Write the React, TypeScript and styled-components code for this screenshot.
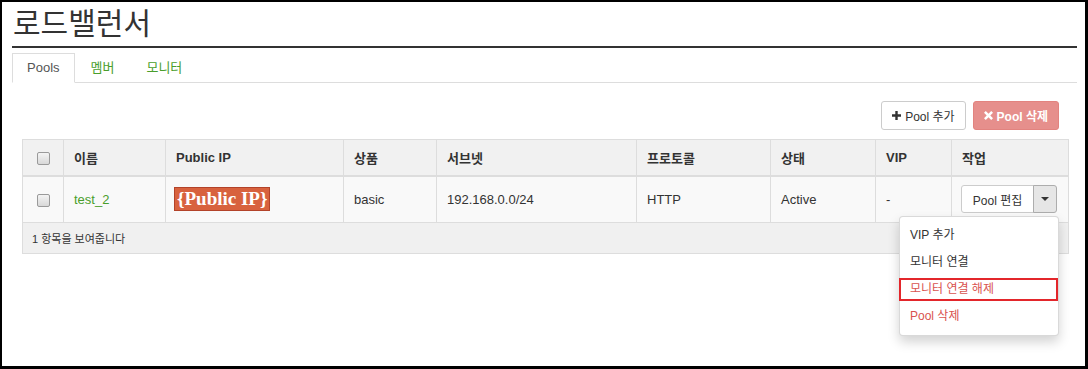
import React from 'react';
import styled, { createGlobalStyle } from 'styled-components';

const GlobalStyle = createGlobalStyle`
  html, body {
    margin: 0;
    padding: 0;
    background: #fff;
  }
  body {
    font-family: "Liberation Sans", "Noto Sans CJK KR", sans-serif;
    font-size: 13px;
    color: #333;
  }
  * {
    box-sizing: border-box;
  }
`;

const Frame = styled.div`
  width: 1088px;
  height: 369px;
  border-style: solid;
  border-color: #000;
  border-width: 2px 3px 3px 2px;
  padding: 0 8px 0 10px;
  overflow: hidden;
`;

const PageTitle = styled.h1`
  margin: 0;
  padding: 4px 0 4px 1px;
  font-size: 30px;
  line-height: 36px;
  font-weight: 400;
  color: #333;
  border-bottom: 2px solid #333;
`;

const TabBar = styled.div`
  display: flex;
  margin-top: 5px;
  height: 30px;
  border-bottom: 1px solid #ddd;
`;

const Tab = styled.div<{ $active?: boolean }>`
  height: 30px;
  margin-bottom: -1px;
  padding: 0 ${p => (p.$active ? 14 : 15)}px;
  line-height: 28px;
  font-size: 13px;
  border: 1px solid ${p => (p.$active ? '#ddd' : 'transparent')};
  border-bottom-color: ${p => (p.$active ? '#fff' : 'transparent')};
  background: ${p => (p.$active ? '#fff' : 'transparent')};
  color: ${p => (p.$active ? '#555' : '#4a9e2c')};
`;

const Toolbar = styled.div`
  display: flex;
  justify-content: flex-end;
  gap: 7px;
  margin-top: 18px;
  padding-right: 18px;
`;

const Button = styled.button<{ $danger?: boolean }>`
  display: inline-flex;
  align-items: center;
  gap: 4px;
  height: 29px;
  padding: 0 10px;
  font-family: inherit;
  font-size: 12px;
  font-weight: ${p => (p.$danger ? 700 : 400)};
  border-radius: 3px;
  border: 1px solid ${p => (p.$danger ? '#e2837f' : '#ccc')};
  background: ${p => (p.$danger ? '#e68f8c' : '#fff')};
  color: ${p => (p.$danger ? '#fff' : '#333')};
`;

const TableWrap = styled.div`
  margin-top: 9px;
  padding: 0 9px 0 10px;
`;

const Table = styled.table`
  width: 1046px;
  table-layout: fixed;
  border-collapse: collapse;
  border: 1px solid #ddd;
`;

const Th = styled.th<{ $center?: boolean }>`
  height: 36px;
  padding: 0 10px;
  text-align: ${p => (p.$center ? 'center' : 'left')};
  font-size: 13px;
  font-weight: 700;
  color: #333;
  background: #f1f1f1;
  border: 1px solid #ddd;
  border-bottom-width: 2px;
`;

const Td = styled.td<{ $center?: boolean; $pad?: number }>`
  height: 47px;
  padding: 0 ${p => p.$pad ?? 10}px;
  text-align: ${p => (p.$center ? 'center' : 'left')};
  font-size: 13px;
  color: #333;
  background: #f9f9f9;
  border: 1px solid #ddd;
  position: relative;
`;

const FooterCell = styled.td`
  height: 31px;
  padding: 0 9px;
  font-size: 11px;
  color: #333;
  background: #f0f0f0;
  border: 1px solid #ddd;
`;

const Check = styled.span`
  display: inline-block;
  width: 13px;
  height: 13px;
  vertical-align: middle;
  border: 1px solid #9a9a9a;
  border-radius: 2px;
  background: linear-gradient(#f4f4f4, #d8d8d8);
`;

const NameLink = styled.span`
  color: #4a9e2c;
`;

const Badge = styled.span`
  display: inline-block;
  padding: 1px 2px;
  font-family: "Liberation Serif", "DejaVu Serif", serif;
  font-size: 19px;
  line-height: 20px;
  font-weight: 700;
  color: #fff;
  background: #d8623e;
  border: 1px solid #b3432a;
  vertical-align: middle;
`;

const SplitGroup = styled.div`
  position: relative;
  display: inline-flex;
  vertical-align: middle;
`;

const SplitMain = styled.button`
  height: 28px;
  width: 73px;
  padding: 0;
  font-family: inherit;
  font-size: 12px;
  color: #333;
  background: #fff;
  border: 1px solid #ccc;
  border-radius: 3px 0 0 3px;
`;

const SplitToggle = styled.button`
  display: flex;
  align-items: center;
  justify-content: center;
  height: 28px;
  width: 24px;
  margin-left: -1px;
  padding: 0;
  background: #e6e6e6;
  border: 1px solid #adadad;
  border-radius: 0 3px 3px 0;
`;

const Caret = styled.span`
  width: 0;
  height: 0;
  border-top: 4px solid #333;
  border-left: 4px solid transparent;
  border-right: 4px solid transparent;
`;

const Menu = styled.ul`
  position: absolute;
  top: calc(100% + 3px);
  right: -2px;
  width: 160px;
  margin: 0;
  padding: 5px 0;
  list-style: none;
  background: #fff;
  border: 1px solid rgba(0, 0, 0, 0.15);
  border-radius: 4px;
  box-shadow: 0 6px 12px rgba(0, 0, 0, 0.175);
  z-index: 10;
`;

const MenuItem = styled.li<{ $danger?: boolean; $marked?: boolean }>`
  height: ${p => (p.$marked ? 23 : 27)}px;
  line-height: ${p => (p.$marked ? 19 : 27)}px;
  margin: ${p => (p.$marked ? '2px 0 2px -1px' : '0')};
  padding: 0 ${p => (p.$marked ? 9 : 10)}px;
  font-size: 12px;
  white-space: nowrap;
  color: ${p => (p.$danger ? '#d9534f' : '#333')};
  border: ${p => (p.$marked ? '2px solid #e3262b' : 'none')};
`;

const PlusIcon = () => (
  <svg width="9" height="9" viewBox="0 0 9 9">
    <path d="M3.3 0h2.4v3.3H9v2.4H5.7V9H3.3V5.7H0V3.3h3.3z" fill="#333" />
  </svg>
);

const RemoveIcon = () => (
  <svg width="9" height="9" viewBox="0 0 9 9">
    <path
      d="M1.8 0L4.5 2.7 7.2 0 9 1.8 6.3 4.5 9 7.2 7.2 9 4.5 6.3 1.8 9 0 7.2 2.7 4.5 0 1.8z"
      fill="#fff"
    />
  </svg>
);

const columns = [41, 102, 178, 93, 200, 134, 105, 76, 117];

const App: React.FC = () => {
  return (
    <>
      <GlobalStyle />
      <Frame>
        <PageTitle>로드밸런서</PageTitle>

        <TabBar>
          <Tab $active>Pools</Tab>
          <Tab>멤버</Tab>
          <Tab>모니터</Tab>
        </TabBar>

        <Toolbar>
          <Button>
            <PlusIcon /> Pool 추가
          </Button>
          <Button $danger>
            <RemoveIcon /> Pool 삭제
          </Button>
        </Toolbar>

        <TableWrap>
          <Table>
            <colgroup>
              {columns.map((w, i) => (
                <col key={i} style={{ width: w }} />
              ))}
            </colgroup>
            <thead>
              <tr>
                <Th $center>
                  <Check />
                </Th>
                <Th>이름</Th>
                <Th>Public IP</Th>
                <Th>상품</Th>
                <Th>서브넷</Th>
                <Th>프로토콜</Th>
                <Th>상태</Th>
                <Th>VIP</Th>
                <Th>작업</Th>
              </tr>
            </thead>
            <tbody>
              <tr>
                <Td $center>
                  <Check />
                </Td>
                <Td>
                  <NameLink>test_2</NameLink>
                </Td>
                <Td $pad={8}>
                  <Badge>{'{Public IP}'}</Badge>
                </Td>
                <Td>basic</Td>
                <Td>192.168.0.0/24</Td>
                <Td>HTTP</Td>
                <Td>Active</Td>
                <Td>-</Td>
                <Td $pad={9}>
                  <SplitGroup>
                    <SplitMain>Pool 편집</SplitMain>
                    <SplitToggle>
                      <Caret />
                    </SplitToggle>
                    <Menu>
                      <MenuItem>VIP 추가</MenuItem>
                      <MenuItem>모니터 연결</MenuItem>
                      <MenuItem $danger $marked>
                        모니터 연결 해제
                      </MenuItem>
                      <MenuItem $danger>Pool 삭제</MenuItem>
                    </Menu>
                  </SplitGroup>
                </Td>
              </tr>
              <tr>
                <FooterCell colSpan={9}>1 항목을 보여줍니다</FooterCell>
              </tr>
            </tbody>
          </Table>
        </TableWrap>
      </Frame>
    </>
  );
};

export default App;
